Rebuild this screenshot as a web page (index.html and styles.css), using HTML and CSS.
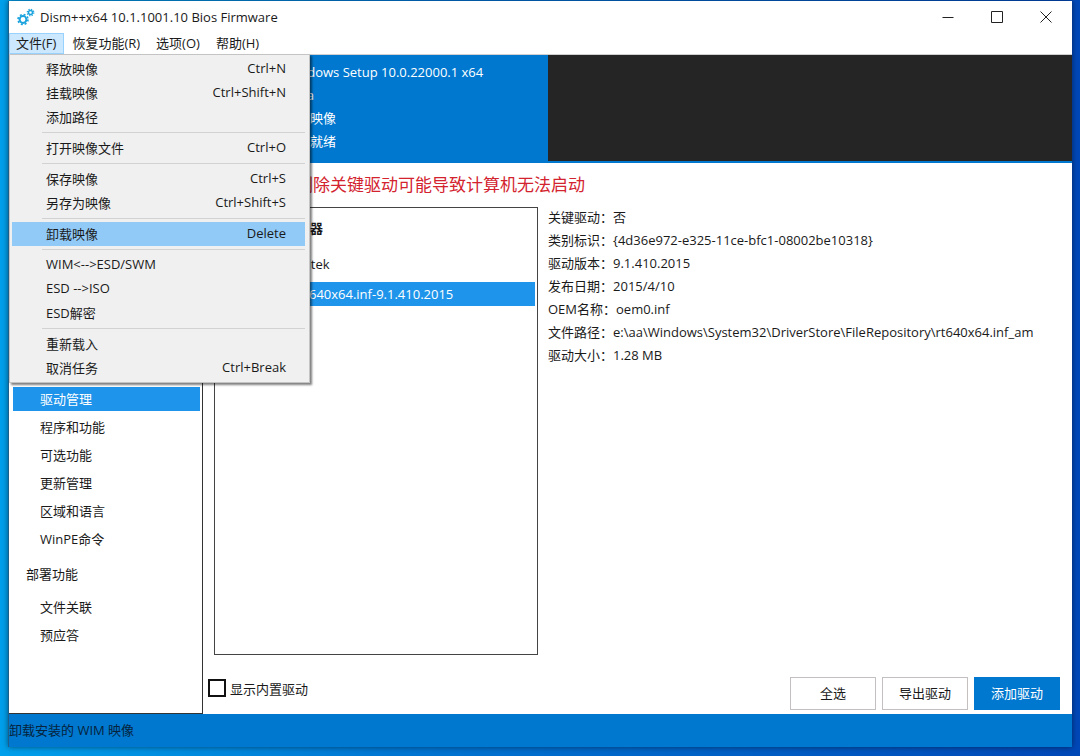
FILE: index.html
```html
<!DOCTYPE html>
<html lang="zh-CN">
  <head>
    <meta charset="UTF-8" />
    <meta name="viewport" content="width=device-width, initial-scale=1.0" />
    <title>Dism++x64 10.1.1001.10 Bios Firmware</title>
    <link rel="stylesheet" href="styles.css" />
  </head>
  <body>
    <div class="window">
      <header class="titlebar">
        <svg class="logo" viewBox="0 0 18 18" fill="none" stroke="#1ba3de">
          <circle cx="6" cy="11.5" r="3.4" stroke-width="2" />
          <circle cx="6" cy="11.5" r="5" stroke-width="1.6" stroke-dasharray="2 1.93" />
          <circle cx="13.5" cy="4.5" r="2" stroke-width="1.5" />
          <circle cx="13.5" cy="4.5" r="3.3" stroke-width="1.2" stroke-dasharray="1.3 1.3" />
        </svg>
        <h1>Dism++x64 10.1.1001.10 Bios Firmware</h1>
        <div class="winControls">
          <button type="button" aria-label="最小化">
            <svg viewBox="0 0 12 12"><path d="M0.5 6.5h11" /></svg>
          </button>
          <button type="button" aria-label="最大化">
            <svg viewBox="0 0 12 12"><path d="M0.5 0.5h11v11h-11z" /></svg>
          </button>
          <button type="button" aria-label="关闭">
            <svg viewBox="0 0 12 12"><path d="M0.5 0.5l11 11M11.5 0.5l-11 11" /></svg>
          </button>
        </div>
      </header>

      <nav class="menubar">
        <button type="button" class="open">文件(F)</button>
        <button type="button">恢复功能(R)</button>
        <button type="button">选项(O)</button>
        <button type="button">帮助(H)</button>

        <div class="dropdown">
          <button type="button"><span>释放映像</span><span>Ctrl+N</span></button>
          <button type="button"><span>挂载映像</span><span>Ctrl+Shift+N</span></button>
          <button type="button"><span>添加路径</span></button>
          <hr />
          <button type="button"><span>打开映像文件</span><span>Ctrl+O</span></button>
          <hr />
          <button type="button"><span>保存映像</span><span>Ctrl+S</span></button>
          <button type="button"><span>另存为映像</span><span>Ctrl+Shift+S</span></button>
          <hr />
          <button type="button" class="active"><span>卸载映像</span><span>Delete</span></button>
          <hr />
          <button type="button"><span>WIM&lt;--&gt;ESD/SWM</span></button>
          <button type="button"><span>ESD --&gt;ISO</span></button>
          <button type="button"><span>ESD解密</span></button>
          <hr />
          <button type="button"><span>重新载入</span></button>
          <button type="button"><span>取消任务</span><span>Ctrl+Break</span></button>
        </div>
      </nav>

      <section class="images">
        <ul class="imageInfo">
          <li>Windows Setup 10.0.22000.1 x64</li>
          <li>e:\aa</li>
          <li>脱机映像</li>
          <li>准备就绪</li>
        </ul>
      </section>

      <div class="content">
        <aside class="sidebar">
          <a href="#" class="selected">驱动管理</a>
          <a href="#">程序和功能</a>
          <a href="#">可选功能</a>
          <a href="#">更新管理</a>
          <a href="#">区域和语言</a>
          <a href="#">WinPE命令</a>
          <h2>部署功能</h2>
          <a href="#">文件关联</a>
          <a href="#">预应答</a>
        </aside>

        <main class="drivers">
          <p class="warning">删除关键驱动可能导致计算机无法启动</p>
          <div class="driverPanes">
            <div class="driverList">
              <div class="category">网络适配器</div>
              <div class="vendor">Realtek</div>
              <div class="driver selected">rt640x64.inf-9.1.410.2015</div>
            </div>
            <dl class="details">
              <div><dt>关键驱动：</dt><dd>否</dd></div>
              <div><dt>类别标识：</dt><dd>{4d36e972-e325-11ce-bfc1-08002be10318}</dd></div>
              <div><dt>驱动版本：</dt><dd>9.1.410.2015</dd></div>
              <div><dt>发布日期：</dt><dd>2015/4/10</dd></div>
              <div><dt>OEM名称：</dt><dd>oem0.inf</dd></div>
              <div><dt>文件路径：</dt><dd>e:\aa\Windows\System32\DriverStore\FileRepository\rt640x64.inf_am</dd></div>
              <div><dt>驱动大小：</dt><dd>1.28 MB</dd></div>
            </dl>
          </div>
          <div class="actions">
            <label class="builtin"><input type="checkbox" />显示内置驱动</label>
            <button type="button" class="btn">全选</button>
            <button type="button" class="btn">导出驱动</button>
            <button type="button" class="btn primary">添加驱动</button>
          </div>
        </main>
      </div>

      <footer class="statusbar">卸载安装的 WIM 映像</footer>
    </div>
  </body>
</html>
```
FILE: styles.css
```css
* {
  box-sizing: border-box;
}

body {
  display: flex;
  min-height: 100vh;
  margin: 0;
  padding: 1px 8px 9px;
  background: linear-gradient(to right, #00a0ec, #0078d4 35%, #0048b8);
  color: #1a1a1a;
  font-family: "Open Sans", "Noto Sans CJK SC", sans-serif;
  font-size: 13px;
}

button {
  margin: 0;
  padding: 0;
  border: 0;
  background: none;
  color: inherit;
  font: inherit;
}

.window {
  display: flex;
  flex-direction: column;
  flex: 1;
  min-width: 0;
  border-left: 1px solid #1c5f8c;
  background: #fff;
  box-shadow: 0 0 6px rgba(0, 0, 0, 0.5);
}

/* title bar */
.titlebar {
  display: flex;
  align-items: center;
  height: 32px;
  padding: 0 2px 0 8px;
}

.logo {
  width: 18px;
  height: 18px;
}

.titlebar h1 {
  flex: 1;
  margin: 0 0 0 5px;
  font-size: 13px;
  font-weight: normal;
}

.winControls {
  display: flex;
}

.winControls button {
  display: grid;
  place-items: center;
  width: 49px;
  height: 32px;
}

.winControls svg {
  width: 12px;
  height: 12px;
  fill: none;
  stroke: #222;
}

/* menu */
.menubar {
  position: relative;
  z-index: 1;
  display: flex;
  gap: 1px;
  height: 22px;
  border-bottom: 1px solid #d0d0d0;
}

.menubar > button {
  padding: 0 8px 2px 7px;
}

.menubar > .open {
  background: #cce8ff;
  box-shadow: inset 0 0 0 1px #99d1ff;
}

.dropdown {
  position: absolute;
  top: 21px;
  left: 0;
  width: 301px;
  padding: 2px 4px 2px 2px;
  border: 1px solid #c4c4c4;
  background: #f0f0f0;
  box-shadow: 2px 2px 2px rgba(0, 0, 0, 0.5);
}

.dropdown button {
  display: flex;
  align-items: center;
  justify-content: space-between;
  width: 100%;
  height: 24px;
  padding: 0 19px 2px 34px;
}

.dropdown .active {
  background: #91c9f7;
}

.dropdown hr {
  height: 1px;
  margin: 3px 0 3px 30px;
  border: 0;
  background: #d2d2d2;
}

/* mounted image */
.images {
  display: flex;
  height: 108px;
  border-bottom: 2px solid #0078cf;
  background: #252525;
}

.imageInfo {
  flex: 0 0 539px;
  margin: 0;
  padding: 6px 0 0 275px;
  background: #0078cf;
  color: #fff;
  line-height: 23px;
  list-style: none;
}

.content {
  display: flex;
  flex: 1;
}

.sidebar {
  flex: 0 0 194px;
  padding: 222px 2px 0 4px;
  border: solid #333;
  border-width: 0 1px 1px 0;
}

.sidebar h2 {
  margin: 0;
  padding-left: 13px;
  font-size: 13px;
  font-weight: normal;
  line-height: 38px;
}

.sidebar a {
  display: block;
  margin: 2px 0 4px;
  padding-left: 27px;
  color: inherit;
  line-height: 24px;
  text-decoration: none;
}

.sidebar .selected,
.driverList .selected {
  background: #1e94ea;
  color: #fff;
}

/* driver page */
.drivers {
  display: flex;
  flex-direction: column;
  flex: 1;
  min-width: 0;
  padding: 0 12px 4px 5px;
}

.warning {
  margin: 0;
  padding-left: 88px;
  color: #d3232e;
  font-size: 17px;
  line-height: 44px;
}

.driverPanes {
  display: flex;
  flex: 1;
  padding-left: 6px;
}

.driverList {
  flex: 0 0 324px;
  padding: 0 2px;
  border: 1px solid #444;
}

.category {
  padding-left: 41px;
  font-weight: bold;
  line-height: 40px;
}

.vendor {
  padding-left: 68px;
  line-height: 32px;
}

.driver {
  margin-top: 2px;
  padding-left: 82px;
  line-height: 24px;
}

.details {
  display: flex;
  flex-direction: column;
  flex: 1;
  gap: 2px;
  margin: 0;
  padding-left: 10px;
  line-height: 21px;
  white-space: nowrap;
}

.details div {
  display: flex;
}

.details dd {
  margin: 0;
}

.actions {
  display: flex;
  align-items: flex-start;
  gap: 6px;
  height: 33px;
  margin-top: 22px;
}

.builtin {
  display: flex;
  align-items: center;
  gap: 4px;
  height: 22px;
  margin-right: auto;
}

.builtin input {
  appearance: none;
  width: 18px;
  height: 18px;
  margin: 0;
  border: 2px solid #111;
  background: #fff;
}

.btn {
  width: 86px;
  height: 33px;
  padding-bottom: 2px;
  border: 1px solid #c4c0c0;
}

.primary {
  border-color: #0078cf;
  background: #0078cf;
  color: #fff;
}

.statusbar {
  height: 33px;
  background: #0078cf;
  color: #06233d;
  line-height: 33px;
}
```
